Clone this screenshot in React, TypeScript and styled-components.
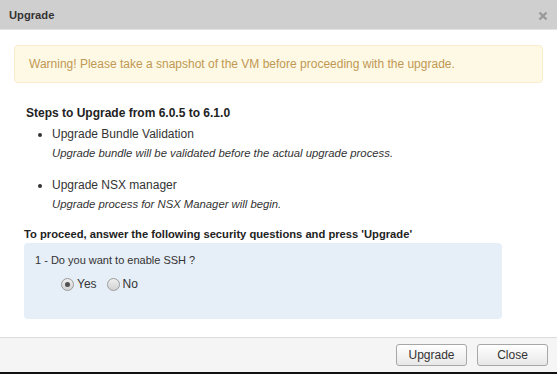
import React from "react";
import styled, { createGlobalStyle } from "styled-components";

const GlobalStyle = createGlobalStyle`
  html, body {
    margin: 0;
    padding: 0;
    background: #ffffff;
  }
  body {
    font-family: "Liberation Sans", Arial, sans-serif;
    color: #333;
  }
`;

const steps = [
  {
    title: "Upgrade Bundle Validation",
    note: "Upgrade bundle will be validated before the actual upgrade process.",
  },
  {
    title: "Upgrade NSX manager",
    note: "Upgrade process for NSX Manager will begin.",
  },
];

const App: React.FC = () => {
  return (
    <>
      <GlobalStyle />
      <Dialog>
        <TitleBar>
          <Title>Upgrade</Title>
          <CloseX width="10" height="10" viewBox="0 0 10 10">
            <path d="M1.5 1.5 L8.5 8.5 M8.5 1.5 L1.5 8.5" />
          </CloseX>
        </TitleBar>

        <Body>
          <Warning>
            Warning! Please take a snapshot of the VM before proceeding with the upgrade.
          </Warning>

          <SectionTitle>Steps to Upgrade from 6.0.5 to 6.1.0</SectionTitle>
          <StepList>
            {steps.map((s) => (
              <StepItem key={s.title}>
                <StepTitle>{s.title}</StepTitle>
                <StepNote>{s.note}</StepNote>
              </StepItem>
            ))}
          </StepList>

          <QuestionTitle>
            To proceed, answer the following security questions and press 'Upgrade'
          </QuestionTitle>
          <QuestionBox>
            <Question>1 - Do you want to enable SSH ?</Question>
            <Options>
              <Option>
                <Radio type="radio" name="ssh" defaultChecked />
                Yes
              </Option>
              <Option>
                <Radio type="radio" name="ssh" />
                No
              </Option>
            </Options>
          </QuestionBox>
        </Body>

        <Footer>
          <Button>Upgrade</Button>
          <Button>Close</Button>
        </Footer>
      </Dialog>
    </>
  );
};

export default App;

const Dialog = styled.div`
  width: 557px;
  height: 374px;
  display: flex;
  flex-direction: column;
  background: #fff;
  border-bottom: 2px solid #111;
  box-sizing: border-box;
  overflow: hidden;
`;

const TitleBar = styled.div`
  height: 29px;
  flex-shrink: 0;
  display: flex;
  align-items: center;
  justify-content: space-between;
  padding: 0 9px 0 9px;
  background: #cfcfcf;
  border-bottom: 1px solid #e2e2e2;
`;

const Title = styled.div`
  font-size: 11.2px;
  font-weight: bold;
  color: #333;
`;

const CloseX = styled.svg`
  margin-top: 2px;
  stroke: #999;
  stroke-width: 2.4;
  fill: none;
`;

const Body = styled.div`
  flex: 1;
  padding: 15px 14px 0 14px;
`;

const Warning = styled.div`
  height: 36px;
  display: flex;
  align-items: center;
  padding: 0 14px;
  font-size: 12px;
  color: #c09853;
  background: #fef9e5;
  border: 1px solid #faebcc;
  border-radius: 4px;
`;

const SectionTitle = styled.div`
  margin: 23px 0 0 12px;
  font-size: 12px;
  font-weight: bold;
  color: #222;
`;

const StepList = styled.ul`
  margin: 6px 0 0 0;
  padding: 0 0 0 38px;
`;

const StepItem = styled.li`
  margin-bottom: 17px;
  font-size: 12px;
`;

const StepTitle = styled.div`
  line-height: 16px;
  color: #333;
`;

const StepNote = styled.div`
  margin-top: 4px;
  font-size: 11.3px;
  font-style: italic;
  line-height: 14px;
  color: #333;
`;

const QuestionTitle = styled.div`
  margin: 7px 0 0 10px;
  font-size: 11.2px;
  font-weight: bold;
  color: #222;
`;

const QuestionBox = styled.div`
  margin: 3px 41px 0 10px;
  height: 76px;
  box-sizing: border-box;
  padding: 11px 11px;
  background: #e6eef7;
  border-radius: 4px;
`;

const Question = styled.div`
  font-size: 11px;
  color: #333;
`;

const Options = styled.div`
  display: flex;
  gap: 10px;
  margin: 11px 0 0 26px;
`;

const Option = styled.label`
  display: flex;
  align-items: center;
  font-size: 12px;
  color: #333;
`;

const Radio = styled.input`
  appearance: none;
  width: 13px;
  height: 13px;
  margin: 1px 3px 0 0;
  border-radius: 50%;
  border: 1px solid #9c9c9c;
  background: linear-gradient(#eeeeee, #d3d3d3);
  box-sizing: border-box;
  position: relative;

  &:checked::after {
    content: "";
    position: absolute;
    left: 3px;
    top: 3px;
    width: 5px;
    height: 5px;
    border-radius: 50%;
    background: #505050;
  }
`;

const Footer = styled.div`
  height: 34px;
  flex-shrink: 0;
  display: flex;
  align-items: center;
  justify-content: flex-end;
  gap: 10px;
  padding-right: 9px;
  background: #f5f5f5;
  border-top: 1px solid #dcdcdc;
`;

const Button = styled.button`
  width: 71px;
  height: 22px;
  padding: 0;
  font-family: "Liberation Sans", Arial, sans-serif;
  font-size: 12px;
  color: #333;
  background: linear-gradient(#ffffff, #e8e8e8);
  border: 1px solid #a7a7a7;
  border-radius: 3px;
`;
